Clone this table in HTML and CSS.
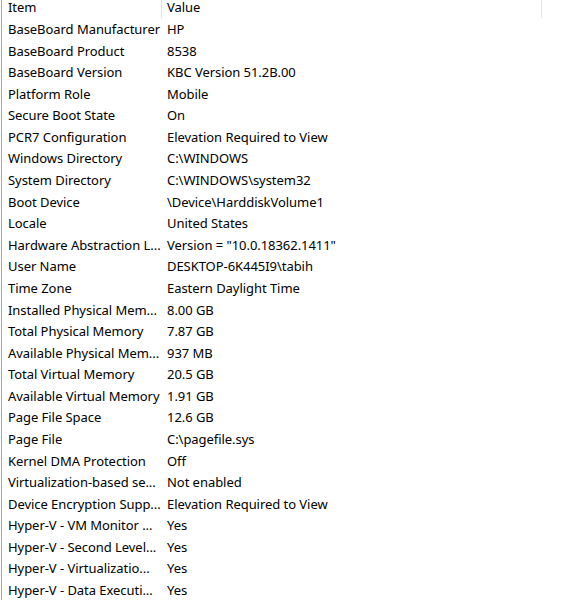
FILE: index.html
```html
<!DOCTYPE html>
<html>
<head>
<meta charset="utf-8">
<link rel="stylesheet" href="styles.css">
</head>
<body>
<div class="list">
  <div class="header">
    <div class="hcell c1">Item</div>
    <div class="hcell c2">Value</div>
  </div>
  <div class="rows">
    <div class="row"><span class="c1">BaseBoard Manufacturer</span><span class="c2">HP</span></div>
    <div class="row"><span class="c1">BaseBoard Product</span><span class="c2">8538</span></div>
    <div class="row"><span class="c1">BaseBoard Version</span><span class="c2">KBC Version 51.2B.00</span></div>
    <div class="row"><span class="c1">Platform Role</span><span class="c2">Mobile</span></div>
    <div class="row"><span class="c1">Secure Boot State</span><span class="c2">On</span></div>
    <div class="row"><span class="c1">PCR7 Configuration</span><span class="c2">Elevation Required to View</span></div>
    <div class="row"><span class="c1">Windows Directory</span><span class="c2">C:\WINDOWS</span></div>
    <div class="row"><span class="c1">System Directory</span><span class="c2">C:\WINDOWS\system32</span></div>
    <div class="row"><span class="c1">Boot Device</span><span class="c2">\Device\HarddiskVolume1</span></div>
    <div class="row"><span class="c1">Locale</span><span class="c2">United States</span></div>
    <div class="row"><span class="c1">Hardware Abstraction L...</span><span class="c2">Version = "10.0.18362.1411"</span></div>
    <div class="row"><span class="c1">User Name</span><span class="c2">DESKTOP-6K445I9\tabih</span></div>
    <div class="row"><span class="c1">Time Zone</span><span class="c2">Eastern Daylight Time</span></div>
    <div class="row"><span class="c1">Installed Physical Mem...</span><span class="c2">8.00 GB</span></div>
    <div class="row"><span class="c1">Total Physical Memory</span><span class="c2">7.87 GB</span></div>
    <div class="row"><span class="c1">Available Physical Mem...</span><span class="c2">937 MB</span></div>
    <div class="row"><span class="c1">Total Virtual Memory</span><span class="c2">20.5 GB</span></div>
    <div class="row"><span class="c1">Available Virtual Memory</span><span class="c2">1.91 GB</span></div>
    <div class="row"><span class="c1">Page File Space</span><span class="c2">12.6 GB</span></div>
    <div class="row"><span class="c1">Page File</span><span class="c2">C:\pagefile.sys</span></div>
    <div class="row"><span class="c1">Kernel DMA Protection</span><span class="c2">Off</span></div>
    <div class="row"><span class="c1">Virtualization-based se...</span><span class="c2">Not enabled</span></div>
    <div class="row"><span class="c1">Device Encryption Supp...</span><span class="c2">Elevation Required to View</span></div>
    <div class="row"><span class="c1">Hyper-V - VM Monitor ...</span><span class="c2">Yes</span></div>
    <div class="row"><span class="c1">Hyper-V - Second Level...</span><span class="c2">Yes</span></div>
    <div class="row"><span class="c1">Hyper-V - Virtualizatio...</span><span class="c2">Yes</span></div>
    <div class="row"><span class="c1">Hyper-V - Data Executi...</span><span class="c2">Yes</span></div>
  </div>
</div>
</body>
</html>
```
FILE: styles.css
```css
html, body {
  margin: 0;
  padding: 0;
  background: #ffffff;
}
body {
  font-family: "Noto Sans", "Open Sans", sans-serif;
  font-size: 13px;
  letter-spacing: -0.05px;
  color: #000000;
  overflow: hidden;
  height: 600px;
}
.list {
  margin-left: 1px;
  border-left: 1px solid #a8a8a8;
  height: 600px;
}
.header {
  display: flex;
  height: 19px;
}
.hcell {
  line-height: 15px;
  white-space: nowrap;
  box-sizing: border-box;
}
.header .c1 {
  width: 160px;
  height: 18px;
  padding-left: 6px;
  border-right: 1px solid #e5e5e5;
}
.header .c2 {
  width: 380px;
  height: 18px;
  padding-left: 5px;
  border-right: 1px solid #e5e5e5;
}
.row {
  display: flex;
  height: 21.58px;
  line-height: 21.58px;
  white-space: nowrap;
}
.row .c1 {
  flex: none;
  width: 159px;
  padding-left: 6px;
  box-sizing: border-box;
  overflow: hidden;
}
.row .c2 {
  padding-left: 6px;
}
```
